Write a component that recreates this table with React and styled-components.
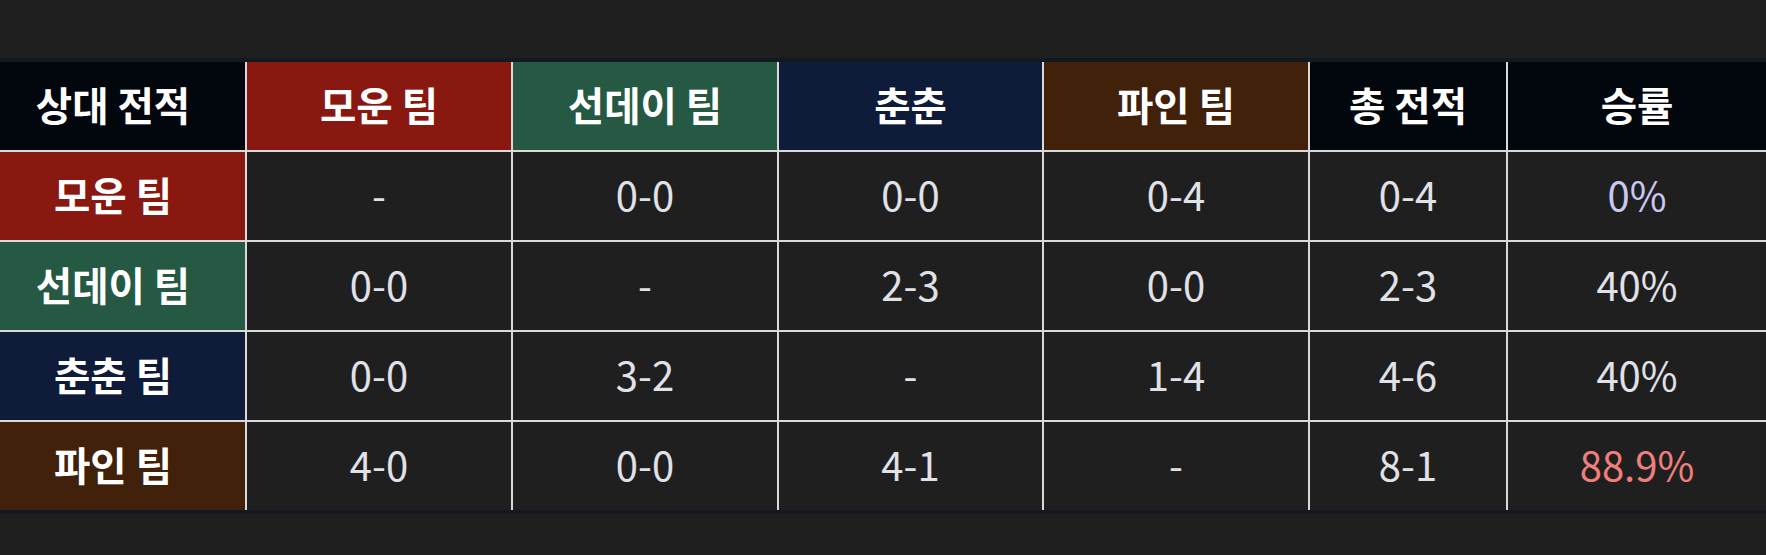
import React from "react";
import styled, { createGlobalStyle } from "styled-components";

const Global = createGlobalStyle`
  html, body { margin: 0; padding: 0; background: #1f1f1f; }
  body { font-family: "Noto Sans CJK KR", "Noto Sans", sans-serif; }
`;

const Page = styled.div`
  width: 1766px;
  height: 555px;
  background: #1f1f1f;
  padding-top: 58px;
  box-sizing: border-box;
`;

const Frame = styled.div`
  background: #121921;
  padding: 4px 0;
`;

const Board = styled.div`
  display: grid;
  grid-template-columns: 245px 264px 264px 263px 264px 196px 1fr;
  grid-auto-rows: 88px;
  gap: 2px;
  background: #d9d9d9;
`;

const teamBg = {
  base: "#1f1f1f",
  head: "#02060d",
  red: "#891811",
  green: "#255944",
  navy: "#0e1b39",
  brown: "#42210a",
};

const Cell = styled.div`
  display: flex;
  align-items: center;
  justify-content: center;
  box-sizing: border-box;
  background: ${(p) => teamBg[p.$tone || "base"]};
  padding: 0 ${(p) => (p.$lead ? "19px" : "0")} 5px 0;
  font-size: ${(p) => (p.$strong ? "39.5px" : "40px")};
  font-weight: ${(p) => (p.$strong ? 700 : 400)};
  color: ${(p) => p.$color || (p.$strong ? "#ffffff" : "#e1e1e8")};
  line-height: 1;
  white-space: nowrap;
`;

const teams = [
  { name: "모운 팀", head: "모운 팀", tone: "red" },
  { name: "선데이 팀", head: "선데이 팀", tone: "green" },
  { name: "춘춘 팀", head: "춘춘", tone: "navy" },
  { name: "파인 팀", head: "파인 팀", tone: "brown" },
];

const rows = [
  { cells: ["-", "0-0", "0-0", "0-4"], total: "0-4", rate: "0%", rateColor: "#c9c8f2" },
  { cells: ["0-0", "-", "2-3", "0-0"], total: "2-3", rate: "40%" },
  { cells: ["0-0", "3-2", "-", "1-4"], total: "4-6", rate: "40%" },
  { cells: ["4-0", "0-0", "4-1", "-"], total: "8-1", rate: "88.9%", rateColor: "#f07f7c" },
];

export default function App() {
  return (
    <>
      <Global />
      <Page>
        <Frame>
          <Board>
            <Cell $strong $lead $tone="head">상대 전적</Cell>
            {teams.map((t) => (
              <Cell key={t.head} $strong $tone={t.tone}>{t.head}</Cell>
            ))}
            <Cell $strong $tone="head">총 전적</Cell>
            <Cell $strong $tone="head">승률</Cell>
            {rows.map((r, i) => (
              <React.Fragment key={i}>
                <Cell $strong $lead $tone={teams[i].tone}>{teams[i].name}</Cell>
                {r.cells.map((c, j) => (
                  <Cell key={j}>{c}</Cell>
                ))}
                <Cell>{r.total}</Cell>
                <Cell $color={r.rateColor}>{r.rate}</Cell>
              </React.Fragment>
            ))}
          </Board>
        </Frame>
      </Page>
    </>
  );
}
